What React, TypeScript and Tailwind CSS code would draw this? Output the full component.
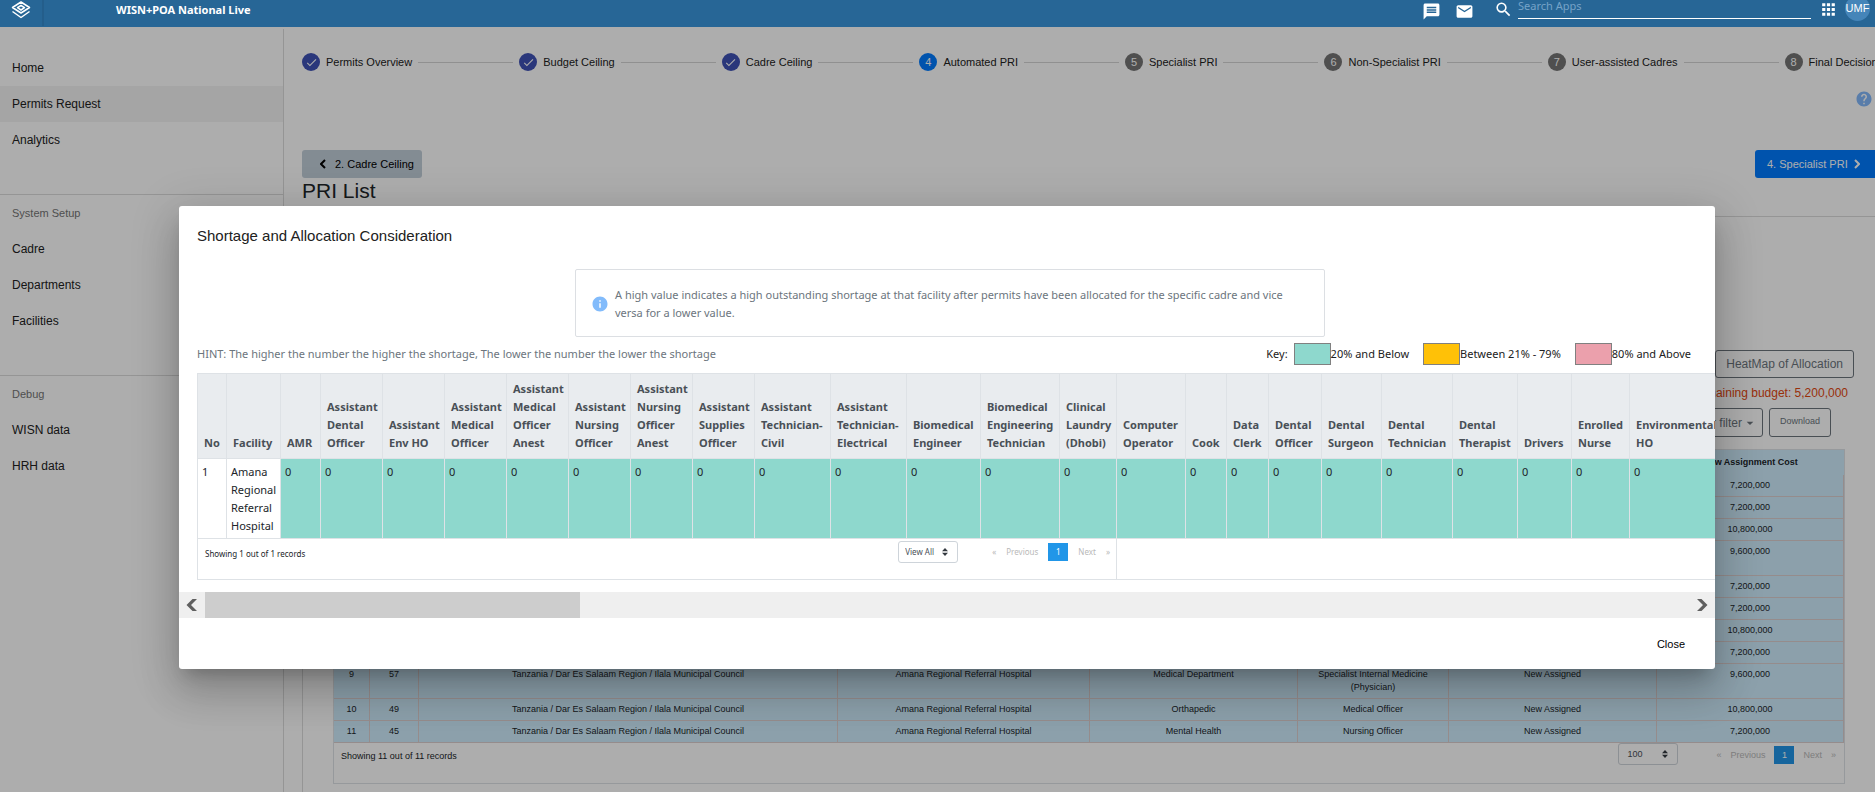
import React from "react";
import { MdMessage, MdEmail, MdSearch, MdApps, MdHelp, MdInfo, MdCheck, MdArrowDropDown } from "react-icons/md";

const arial = "font-['Liberation_Sans',Arial,sans-serif]";
const noto = "font-['Noto_Sans',sans-serif]";

const steps = [
  { label: "Permits Overview", state: "done" },
  { label: "Budget Ceiling", state: "done" },
  { label: "Cadre Ceiling", state: "done" },
  { label: "Automated PRI", state: "active" },
  { label: "Specialist PRI", state: "todo" },
  { label: "Non-Specialist PRI", state: "todo" },
  { label: "User-assisted Cadres", state: "todo" },
  { label: "Final Decision", state: "todo" },
];

const stepColors: Record<string, string> = {
  done: "bg-[#3f51b5]",
  active: "bg-[#007bff]",
  todo: "bg-[#757575]",
};

const council = "Tanzania / Dar Es Salaam Region / Ilala Municipal Council";
const hospital = "Amana Regional Referral Hospital";

const assignments = [
  ["1", "61", "Medical Department", "Medical Officer", "7,200,000"],
  ["2", "60", "Mental Health", "Nursing Officer", "7,200,000"],
  ["3", "58", "Orthapedic", "Medical Officer", "10,800,000"],
  ["4", "56", "Medical Department", "Specialist Internal Medicine (Physician)", "9,600,000"],
  ["5", "55", "Mental Health", "Nursing Officer", "7,200,000"],
  ["6", "54", "Mental Health", "Nursing Officer", "7,200,000"],
  ["7", "53", "Orthapedic", "Medical Officer", "10,800,000"],
  ["8", "52", "Mental Health", "Nursing Officer", "7,200,000"],
  ["9", "57", "Medical Department", "Specialist Internal Medicine (Physician)", "9,600,000"],
  ["10", "49", "Orthapedic", "Medical Officer", "10,800,000"],
  ["11", "45", "Mental Health", "Nursing Officer", "7,200,000"],
];

const shortageColumns: { label: string; width: string }[] = [
  { label: "AMR", width: "w-[40px]" },
  { label: "Assistant Dental Officer", width: "w-[62px]" },
  { label: "Assistant Env HO", width: "w-[62px]" },
  { label: "Assistant Medical Officer", width: "w-[62px]" },
  { label: "Assistant Medical Officer Anest", width: "w-[62px]" },
  { label: "Assistant Nursing Officer", width: "w-[62px]" },
  { label: "Assistant Nursing Officer Anest", width: "w-[62px]" },
  { label: "Assistant Supplies Officer", width: "w-[62px]" },
  { label: "Assistant Technician- Civil", width: "w-[76px]" },
  { label: "Assistant Technician- Electrical", width: "w-[76px]" },
  { label: "Biomedical Engineer", width: "w-[74px]" },
  { label: "Biomedical Engineering Technician", width: "w-[79px]" },
  { label: "Clinical Laundry (Dhobi)", width: "w-[57px]" },
  { label: "Computer Operator", width: "w-[69px]" },
  { label: "Cook", width: "w-[41px]" },
  { label: "Data Clerk", width: "w-[42px]" },
  { label: "Dental Officer", width: "w-[53px]" },
  { label: "Dental Surgeon", width: "w-[60px]" },
  { label: "Dental Technician", width: "w-[71px]" },
  { label: "Dental Therapist", width: "w-[65px]" },
  { label: "Drivers", width: "w-[54px]" },
  { label: "Enrolled Nurse", width: "w-[58px]" },
  { label: "Environmental HO", width: "w-[90px]" },
];

function Logo() {
  return (
    <svg className="h-[18px] w-5" viewBox="0 0 20 18" fill="none" stroke="white" strokeWidth="1.5" strokeLinejoin="round">
      <path d="M10 1 L18.5 6.5 L10 12 L1.5 6.5 Z" />
      <path d="M10 4.5 L13.5 6.7 L10 9 L6.5 6.7 Z" />
      <path d="M1.5 10.5 L10 16.5 L18.5 10.5" />
    </svg>
  );
}

function Header() {
  return (
    <header className={`relative z-20 flex h-[27px] shrink-0 items-start overflow-hidden bg-[#276696] pr-[5px] text-white ${noto}`}>
      <a href="#home" aria-label="Applications" className="flex h-[26px] w-[44px] shrink-0 justify-center border-r-2 border-[#245e8b] pt-px">
        <Logo />
      </a>
      <h1 className="ml-[72px] pt-px text-[11px] leading-[18px] font-bold">WISN+POA National Live</h1>
      <div className="ml-auto flex items-start">
        <button aria-label="Messages" className="mt-[2px]"><MdMessage size={19} /></button>
        <button aria-label="Mail" className="mt-[2px] ml-[14px]"><MdEmail size={19} /></button>
        <label htmlFor="search-apps" aria-label="Search" className="ml-5"><MdSearch size={19} /></label>
        <input
          id="search-apps"
          placeholder="Search Apps"
          className="ml-[5px] h-[19px] w-[293px] border-b border-white bg-transparent pb-[7px] text-[11px] leading-[12px] outline-none placeholder:text-[#76a3c8]"
        />
        <button aria-label="Apps" className="ml-2"><MdApps size={19} /></button>
        <button aria-label="Account" className={`-mt-1 ml-[7px] flex size-[25px] items-center justify-center rounded-full bg-[#4585b9] text-[11px] ${arial}`}>UMF</button>
      </div>
    </header>
  );
}

function NavGroup({ title, items, active }: { title?: string; items: string[]; active?: string }) {
  return (
    <div className="border-b border-[#dcdcdc] pb-9 last:border-b-0">
      {title && <div className="px-3 text-[11px] leading-9 text-[#757575]">{title}</div>}
      {items.map((item) => (
        <a key={item} href="#nav" className={`block px-3 leading-9 ${item === active ? "bg-[#f3f3f3]" : ""}`}>{item}</a>
      ))}
    </div>
  );
}

function Sidebar() {
  return (
    <nav className="mt-[2px] w-[284px] shrink-0 border-r border-[#dcdcdc] pt-[21px] text-[12px] text-[#212121]">
      <NavGroup items={["Home", "Permits Request", "Analytics"]} active="Permits Request" />
      <NavGroup title="System Setup" items={["Cadre", "Departments", "Facilities"]} />
      <NavGroup title="Debug" items={["WISN data", "HRH data"]} />
    </nav>
  );
}

function Stepper() {
  return (
    <ol className="flex items-center gap-[6px] pt-[26px] text-[11px] text-[#212121]">
      {steps.map((step, i) => (
        <React.Fragment key={step.label}>
          {i > 0 && <li aria-hidden className="h-px w-[95px] shrink-0 bg-[#d4d4d4]" />}
          <li className="flex shrink-0 items-center gap-[6px]">
            <span className={`flex size-[18px] items-center justify-center rounded-full text-white ${stepColors[step.state]}`}>
              {step.state === "done" ? <MdCheck size={13} /> : i + 1}
            </span>
            <span className="whitespace-nowrap">{step.label}</span>
          </li>
        </React.Fragment>
      ))}
    </ol>
  );
}

function PageSelect({ label, value, narrow }: { label: string; value: string; narrow?: boolean }) {
  return (
    <span className="relative inline-flex">
      <select
        aria-label={label}
        className={`h-[22px] w-[60px] appearance-none rounded-[3px] border border-[#ced4da] bg-transparent text-[#495057] ${narrow ? "pl-[6px] text-[8px]" : "pl-2 text-[9px]"}`}
      >
        <option>{value}</option>
      </select>
      <svg className="pointer-events-none absolute top-[7px] right-[10px] h-[8px] w-[6px]" viewBox="0 0 6 8" fill="#343a40">
        <path d="M3 0 L6 3.3 H0 Z M0 4.7 H6 L3 8 Z" />
      </svg>
    </span>
  );
}

function Pagination({ size }: { size: string }) {
  return (
    <div className={`flex h-[18px] items-center text-[#b9b9b9] ${size}`}>
      <button>«</button>
      <button>Previous</button>
      <button className="h-[18px] w-5 bg-[#2196e8] text-white">1</button>
      <button>Next</button>
      <button>»</button>
    </div>
  );
}

function AssignmentTable() {
  const cell = "border-r border-b border-[#dccfcf] px-1 py-1 align-top";
  return (
    <div className="mt-3 mr-[30px] ml-[30px] border border-[#dee2e6] text-[9px] leading-[13px] text-[#212529]">
      <table className="w-full table-fixed border-separate border-spacing-0 bg-[#ceecfd] text-center">
        <colgroup>
          <col className="w-[36px]" />
          <col className="w-[49px]" />
          <col className="w-[419px]" />
          <col />
          <col className="w-[208px]" />
          <col className="w-[151px]" />
          <col className="w-[208px]" />
          <col className="w-[187px]" />
        </colgroup>
        <thead>
          <tr className="h-[25px]">
            {["No", "ID", "Council", "Facility", "Department", "Cadre", "Status", "New Assignment Cost"].map((h) => (
              <th key={h} className="px-1 font-bold">{h}</th>
            ))}
          </tr>
        </thead>
        <tbody>
          {assignments.map(([no, id, department, cadre, cost]) => (
            <tr key={no}>
              <td className={cell}>{no}</td>
              <td className={cell}>{id}</td>
              <td className={cell}>{council}</td>
              <td className={cell}>{hospital}</td>
              <td className={cell}>{department}</td>
              <td className={cell}>{cadre}</td>
              <td className={cell}>New Assigned</td>
              <td className={cell}>{cost}</td>
            </tr>
          ))}
        </tbody>
      </table>
      <div className="flex h-10 items-start pr-2 pl-[7px]">
        <span className="pt-[7px]">Showing 11 out of 11 records</span>
        <div className="ml-auto flex gap-[38px]">
          <PageSelect label="Assignments per page" value="100" />
          <div className="pt-[3px]"><Pagination size="gap-[9px] text-[9px]" /></div>
        </div>
      </div>
    </div>
  );
}

function Main() {
  const outlined = "rounded-[3px] border border-[#6c757d] text-[#6c757d]";
  return (
    <main className="flex min-w-0 flex-1 flex-col overflow-hidden pl-[18px] text-[#212529]">
      <Stepper />
      <button aria-label="Help" className="mt-[19px] mr-[2px] self-end text-[#83b9fb]"><MdHelp size={18} /></button>
      <div className="mt-[42px] flex justify-between text-[11px]">
        <button className="flex h-7 w-[120px] items-center gap-[9px] rounded-[3px] bg-[#c2ced9] pl-[18px] text-black">
          <svg className="h-[10px] w-[6px]" viewBox="0 0 6 10" fill="none" stroke="currentColor" strokeWidth="2"><path d="M5 1 L1 5 L5 9" /></svg>
          2. Cadre Ceiling
        </button>
        <button className="flex h-7 w-[120px] items-center gap-[6px] rounded-l-[3px] bg-[#007bff] pl-3 text-white">
          4. Specialist PRI
          <svg className="h-[10px] w-[6px]" viewBox="0 0 6 10" fill="none" stroke="currentColor" strokeWidth="2"><path d="M1 1 L5 5 L1 9" /></svg>
        </button>
      </div>
      <h2 className="text-[21px] leading-[26px]">PRI List</h2>
      <section className="mt-3 flex-1 border-t border-l border-[#dcdcdc] pt-[133px]">
        <div className="flex justify-end pr-[21px]">
          <button className={`h-7 px-[10px] text-[12px] ${outlined}`}>HeatMap of Allocation</button>
        </div>
        <p className="mt-[6px] pr-[27px] text-right text-[12px] leading-[19px] text-[#e2470f]">Remaining budget: 5,200,000</p>
        <div className="mt-[5px] flex justify-end gap-[6px] pr-11">
          <button className={`flex h-[29px] items-center pr-1 pl-3 text-[12px] ${outlined}`}>Clear filter <MdArrowDropDown size={16} /></button>
          <button className={`h-[29px] px-[10px] pb-[2px] text-[9px] ${outlined}`}>Download</button>
        </div>
        <AssignmentTable />
      </section>
    </main>
  );
}

function Legend({ color, label }: { color: string; label: string }) {
  return (
    <span className="flex items-center">
      <span className={`h-[22px] w-[37px] border border-[#808080] ${color}`} />
      {label}
    </span>
  );
}

function ShortageTable() {
  const line = "border border-[#dee2e6]";
  const head = `${line} bg-[#e9ecef] py-[6px] align-bottom font-bold text-[#495057]`;
  return (
    <table className="w-max table-fixed border-collapse text-left text-[11px] leading-[18px] text-[#212529]">
      <thead>
        <tr>
          <th className={head}><div className="-mr-px w-[29px] pl-[6px]">No</div></th>
          <th className={head}><div className="-mr-px w-[54px] pl-[6px]">Facility</div></th>
          {shortageColumns.map((c) => (
            <th key={c.label} className={head}>
              <div className={`-mr-px pl-[6px] ${c.width}`}>{c.label}</div>
            </th>
          ))}
        </tr>
      </thead>
      <tbody>
        <tr className="h-20 align-top">
          <td className={`${line} px-1 pt-1`}>1</td>
          <td className={`${line} px-1 pt-1`}><div className="w-[45px]">Amana Regional Referral Hospital</div></td>
          {shortageColumns.map((c) => (
            <td key={c.label} className={`${line} bg-[#8ed8cd] px-1 pt-1`}>0</td>
          ))}
        </tr>
      </tbody>
      <tfoot>
        <tr className="h-[41px] align-top text-[8px]">
          <td colSpan={15} className={`${line} pr-[6px] pl-[7px]`}>
            <div className="flex">
              <span className="pt-[6px]">Showing 1 out of 1 records</span>
              <div className="ml-auto flex gap-[34px] pt-[2px]">
                <PageSelect label="Facilities per page" value="View All" narrow />
                <div className="pt-[2px]"><Pagination size="gap-[10px] text-[8px]" /></div>
              </div>
            </div>
          </td>
          <td colSpan={10} className={line} />
        </tr>
      </tfoot>
    </table>
  );
}

function ShortageDialog() {
  return (
    <div
      role="dialog"
      aria-labelledby="shortage-title"
      className={`flex w-full max-w-[1536px] flex-col overflow-hidden rounded-[3px] bg-white text-[11px] leading-[18px] shadow-[0_11px_15px_-7px_rgba(0,0,0,0.2),0_24px_38px_3px_rgba(0,0,0,0.14),0_9px_46px_8px_rgba(0,0,0,0.12)] ${noto}`}
    >
      <h2 id="shortage-title" className={`px-[18px] pt-5 text-[15px] leading-5 text-[#212121] ${arial}`}>Shortage and Allocation Consideration</h2>
      <div className="mt-[23px] flex justify-center pr-3 pl-[18px]">
        <div className="flex w-[750px] items-center gap-[6px] rounded-[2px] border border-[#dcdfe3] pt-4 pr-4 pb-[14px] pl-[15px] text-[#6c757d]">
          <MdInfo size={18} className="shrink-0 text-[#82bbfb]" />
          <p>A high value indicates a high outstanding shortage at that facility after permits have been allocated for the specific cadre and vice versa for a lower value.</p>
        </div>
      </div>
      <div className="mt-[6px] flex items-center justify-between pr-6 pl-[18px]">
        <p className="text-[#6c757d]">HINT: The higher the number the higher the shortage, The lower the number the lower the shortage</p>
        <div className="flex items-center gap-[14px] text-[#212121]">
          <span className="-mr-2">Key:</span>
          <Legend color="bg-[#8ed8cd]" label="20% and Below" />
          <Legend color="bg-[#ffc107]" label="Between 21% - 79%" />
          <Legend color="bg-[#eba0ac]" label="80% and Above" />
        </div>
      </div>
      <div className="mt-2 overflow-hidden pl-[18px]">
        <ShortageTable />
      </div>
      <div className="mt-3 flex h-[26px] items-center bg-[#efefef]">
        <button aria-label="Scroll left" className="flex w-[26px] shrink-0 pl-[7px]">
          <svg className="h-3 w-[11px]" viewBox="0 0 11 12" fill="#606060"><path d="M11 0 H6.5 L0.5 6 L6.5 12 H11 L5 6 Z" /></svg>
        </button>
        <div className="flex-1 self-stretch"><div className="h-full w-[375px] bg-[#cdcdcd]" /></div>
        <button aria-label="Scroll right" className="flex w-[26px] shrink-0 justify-center">
          <svg className="h-3 w-[11px]" viewBox="0 0 11 12" fill="#606060"><path d="M0 0 H4.5 L10.5 6 L4.5 12 H0 L6 6 Z" /></svg>
        </button>
      </div>
      <div className={`flex justify-end py-[14px] pr-[30px] text-[11px] ${arial}`}>
        <button className="h-[23px] text-black">Close</button>
      </div>
    </div>
  );
}

export default function App() {
  return (
    <div className={`relative flex h-screen flex-col overflow-hidden bg-white ${arial}`}>
      <Header />
      <div className="flex min-h-0 flex-1">
        <Sidebar />
        <Main />
      </div>
      <div className="absolute inset-0 z-10 flex items-start justify-center bg-black/32 pt-[206px] pl-[19px]">
        <ShortageDialog />
      </div>
    </div>
  );
}
